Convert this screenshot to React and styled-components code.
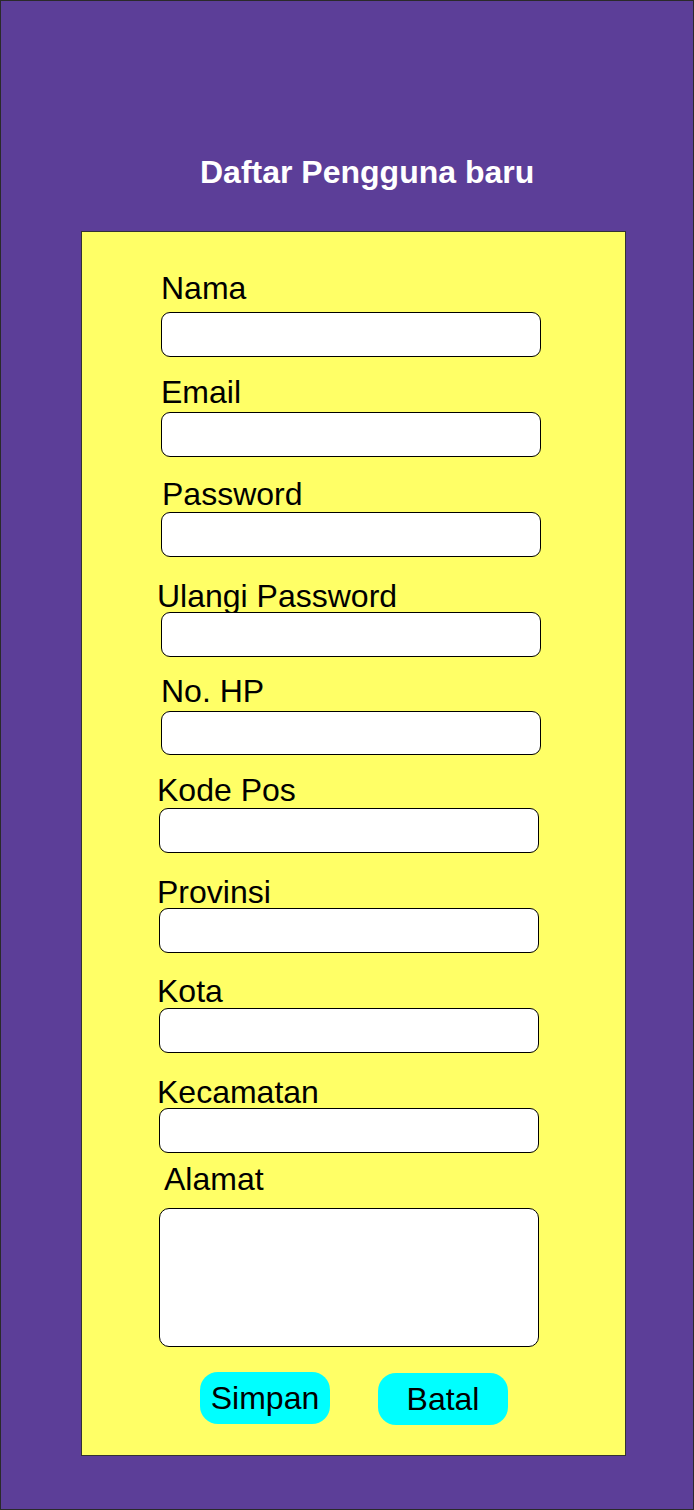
import React from "react";
import styled, { createGlobalStyle } from "styled-components";

const GlobalStyle = createGlobalStyle`
  html, body {
    margin: 0;
    padding: 0;
    background: #5c3e98;
  }
  * {
    box-sizing: border-box;
  }
`;

const Frame = styled.div`
  width: 694px;
  height: 1510px;
  background: #5c3e98;
  border: 1px solid #2a2a2a;
  font-family: "Liberation Sans", Arial, sans-serif;
`;

const Title = styled.h1`
  margin: 0;
  padding: 155px 0 0 199px;
  font-size: 32px;
  line-height: 32px;
  font-weight: bold;
  color: #ffffff;
`;

const Panel = styled.div`
  margin: 43px 0 0 80px;
  width: 545px;
  height: 1225px;
  background: #ffff66;
  border: 1px solid #333333;
  padding: 0 0 0 73px;
`;

const Form = styled.form`
  display: flex;
  flex-direction: column;
  align-items: flex-start;
`;

const Field = styled.div`
  display: flex;
  flex-direction: column;
  margin-top: ${(p) => p.$top}px;
`;

const Label = styled.label`
  display: block;
  height: 32px;
  font-size: 32px;
  line-height: 32px;
  color: #000000;
  margin-left: ${(p) => p.$indent}px;
  margin-bottom: ${(p) => p.$gap}px;
`;

const Input = styled.input`
  display: block;
  width: 380px;
  height: ${(p) => p.$height || 45}px;
  margin: 0 0 0 ${(p) => p.$shift}px;
  background: #ffffff;
  border: 1px solid #000000;
  border-radius: 9px;
  outline: none;
  font: 20px "Liberation Sans", Arial, sans-serif;
  padding: 0 10px;
`;

const TextArea = styled.textarea`
  display: block;
  width: 380px;
  height: 139px;
  margin: 0 0 0 ${(p) => p.$shift}px;
  background: #ffffff;
  border: 1px solid #000000;
  border-radius: 10px;
  outline: none;
  resize: none;
  font: 20px "Liberation Sans", Arial, sans-serif;
  padding: 8px 10px;
`;

const Buttons = styled.div`
  display: flex;
  gap: 48px;
  margin: 25px 0 0 45px;
`;

const Button = styled.button`
  width: 130px;
  height: 52px;
  border: none;
  border-radius: 18px;
  background: #00ffff;
  color: #000000;
  font: 32px "Liberation Sans", Arial, sans-serif;
  padding: 0;
  cursor: pointer;
  margin-top: ${(p) => p.$drop || 0}px;
`;

const fields = [
  { label: "Nama", top: 40, gap: 8, indent: 6, shift: 6 },
  { label: "Email", top: 19, gap: 4, indent: 6, shift: 6 },
  { label: "Password", top: 21, gap: 2, indent: 7, shift: 6 },
  { label: "Ulangi Password", top: 22.5, gap: 0.5, indent: 2, shift: 6 },
  { label: "No. HP", top: 18, gap: 4, indent: 6, shift: 6, height: 44 },
  { label: "Kode Pos", top: 19, gap: 2, indent: 2, shift: 4 },
  { label: "Provinsi", top: 23, gap: 0, indent: 2, shift: 4 },
  { label: "Kota", top: 22, gap: 1, indent: 2, shift: 4 },
  { label: "Kecamatan", top: 23, gap: 0, indent: 2, shift: 4 },
];

const App = () => {
  return (
    <Frame>
      <GlobalStyle />
      <Title>Daftar Pengguna baru</Title>
      <Panel>
        <Form onSubmit={(e) => e.preventDefault()}>
          {fields.map((f) => (
            <Field key={f.label} $top={f.top}>
              <Label $indent={f.indent} $gap={f.gap}>
                {f.label}
              </Label>
              <Input type="text" $shift={f.shift} $height={f.height} />
            </Field>
          ))}
          <Field $top={10}>
            <Label $indent={9} $gap={13}>
              Alamat
            </Label>
            <TextArea $shift={4} />
          </Field>
          <Buttons>
            <Button type="submit">Simpan</Button>
            <Button type="button" $drop={1}>
              Batal
            </Button>
          </Buttons>
        </Form>
      </Panel>
    </Frame>
  );
};

export default App;
